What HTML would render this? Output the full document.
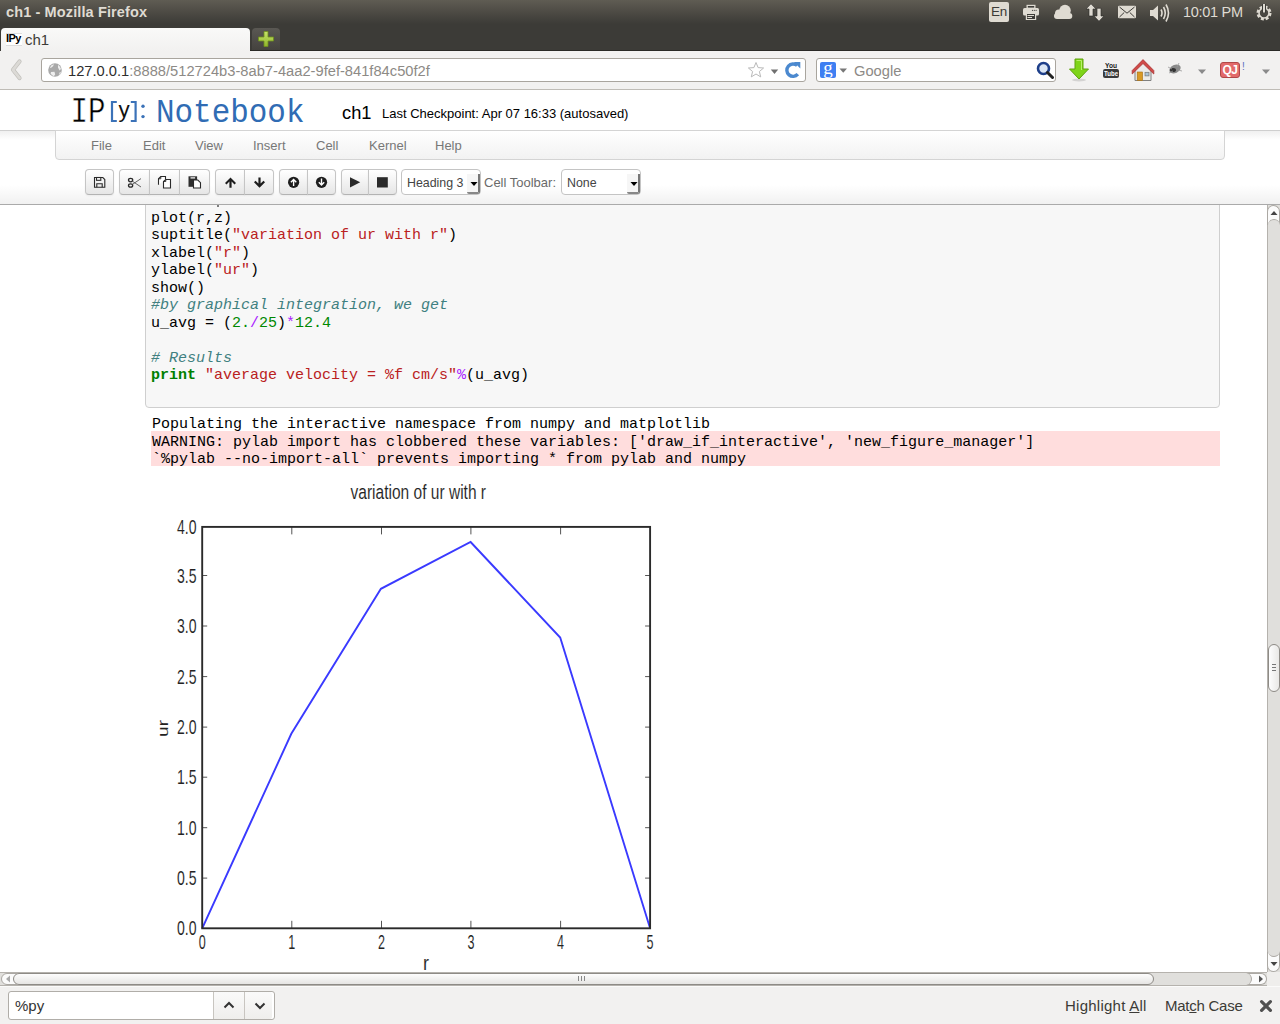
<!DOCTYPE html>
<html><head><meta charset="utf-8">
<style>
*{box-sizing:border-box;margin:0;padding:0}
html,body{width:1280px;height:1024px;overflow:hidden;background:#fff;font-family:"Liberation Sans",sans-serif;position:relative}
.a{position:absolute}
#panel{left:0;top:0;width:1280px;height:51px;background:linear-gradient(#5f5c53 0px,#4a4842 14px,#3c3b37 24px,#3c3b37 50px);}
#title{left:6px;top:4px;font-size:14.5px;font-weight:bold;color:#dfdbd2;letter-spacing:0.12px}
#tab{left:1px;top:28px;width:249px;height:23px;background:linear-gradient(#f9f9f8,#f2f1f0);border-radius:4px 4px 0 0}
#newtab{left:252px;top:28px;width:28px;height:22px;background:linear-gradient(#5a5853,#44423e);border-radius:4px 4px 0 0}
#navbar{left:0;top:51px;width:1280px;height:39px;background:#f2f1f0;border-bottom:1px solid #bfbcb6}
#darkline{left:0;top:50px;width:1280px;height:1px;background:#2a2926}
.urlbox{background:#fff;border:1px solid #a9a59e;border-radius:3px}
#page{left:0;top:90px;width:1280px;height:882px;background:#fff;overflow:hidden}
.mono{font-family:"Liberation Mono",monospace}
.menu{top:138px;font-size:13px;color:#777}
.btn{top:169px;height:26px;background:linear-gradient(#fff,#e6e6e6);border:1px solid #c5c5c5;border-bottom-color:#b3b3b3;box-shadow:inset 0 1px 0 rgba(255,255,255,.2),0 1px 2px rgba(0,0,0,.05)}
.sel{top:169px;height:26px;background:#fff;border:1px solid #c4c4c4;border-radius:4px;font-size:12.4px;color:#444;padding:5.5px 0 0 5px;white-space:nowrap}
.ddb{top:174px;width:13px;height:20px;background:#f6f6f6;border-right:2px solid #777;border-bottom:2px solid #888;border-radius:0 0 2px 2px}
.code{font-size:15px;line-height:17.5px;color:#000}
.code .s{color:#ba2121}.code .c{color:#408080;font-style:italic}.code .k{color:#008000;font-weight:bold}.code .n{color:#080}.code .o{color:#a2f}
.pl{font-family:"Liberation Sans",sans-serif;font-size:19.5px;fill:#222;stroke:#fff;stroke-width:0.1px;paint-order:normal}
</style></head><body>
<div id="panel" class="a"></div>
<div id="title" class="a">ch1 - Mozilla Firefox</div>
<div id="tab" class="a"></div>
<div class="a" style="left:6px;top:33px;width:16px;height:13px;background:#fff;border-top:1px solid #ddd;border-bottom:1px solid #ddd"></div>
<div class="a" style="left:6px;top:32px;font-size:11px;font-weight:bold;color:#000;letter-spacing:-0.6px">IPy</div>
<div class="a" style="left:25px;top:31px;font-size:15px;color:#3c3b37">ch1</div>
<div id="newtab" class="a"></div>
<svg class="a" style="left:258px;top:31px" width="16" height="16" viewBox="0 0 16 16"><defs><linearGradient id="gp" x1="0" y1="0" x2="0" y2="1"><stop offset="0" stop-color="#c6e36a"/><stop offset="1" stop-color="#8fb52a"/></linearGradient></defs><path d="M6 0.5h4v5.5h5.5v4H10v5.5H6V10H0.5V6H6z" fill="url(#gp)" stroke="#6e8f1c" stroke-width="0.8"/></svg>
<div class="a" style="left:250px;top:50px;width:1030px;height:1px;background:#2a2926"></div>
<div id="navbar" class="a"></div>
<!-- indicators -->
<div class="a" style="left:989px;top:2px;width:20px;height:20px;background:#dfdbd2;border-radius:2px;color:#3c3b37;font-size:13.5px;text-align:center;line-height:20px;letter-spacing:-0.3px">En</div>
<svg class="a" style="left:1020px;top:2px" width="22" height="22" viewBox="1020 2 22 22"><rect x="1026.5" y="4.8" width="9" height="4" fill="#dfdbd2"/><rect x="1027.8" y="6" width="6.4" height="1.6" fill="#3c3b37"/><rect x="1023" y="8" width="16" height="7.5" rx="1.5" fill="#dfdbd2"/><circle cx="1032.5" cy="10.3" r="0.6" fill="#3c3b37"/><circle cx="1034.3" cy="10.3" r="0.6" fill="#3c3b37"/><circle cx="1036.1" cy="10.3" r="0.6" fill="#3c3b37"/><rect x="1025.8" y="13" width="10.4" height="7" fill="#dfdbd2"/><rect x="1027" y="14" width="8" height="5" fill="#3c3b37"/><rect x="1027.5" y="15" width="6.5" height="1" fill="#dfdbd2"/><rect x="1027.5" y="17" width="4.5" height="1" fill="#dfdbd2"/></svg>
<svg class="a" style="left:1052px;top:2px" width="22" height="20" viewBox="1052 2 22 20"><circle cx="1065" cy="10.6" r="5.8" fill="#dfdbd2"/><circle cx="1058.8" cy="13.2" r="3.8" fill="#dfdbd2"/><rect x="1054" y="13" width="18.3" height="6" rx="3" fill="#dfdbd2"/></svg>
<svg class="a" style="left:1084px;top:2px" width="24" height="22" viewBox="1084 2 24 22"><path d="M1091 3.8 L1096 9 H1093 V16 H1089 V9 H1086 Z" fill="#dfdbd2" stroke="#2a2926" stroke-width="0.6"/><path d="M1099 21.2 L1104 16 H1101 V8.3 H1097 V16 H1094 Z" fill="#dfdbd2" stroke="#2a2926" stroke-width="0.6"/></svg>
<svg class="a" style="left:1116px;top:4px" width="22" height="16" viewBox="1116 4 22 16"><rect x="1118" y="5.8" width="18" height="12.4" rx="1.2" fill="#dfdbd2"/><path d="M1119.5 7 L1127 13.2 L1134.5 7 M1119.5 17 L1124.2 12.5 M1134.5 17 L1129.8 12.5" fill="none" stroke="#3c3b37" stroke-width="1"/></svg>
<svg class="a" style="left:1149px;top:3px" width="22" height="20" viewBox="0 0 22 20"><path d="M1 7 H4 L9 2.5 V17.5 L4 13 H1 Z" fill="#dfdbd2"/><path d="M12 6.5 Q14 10 12 13.5 M14.5 4 Q18 10 14.5 16 M17 1.5 Q22 10 17 18.5" fill="none" stroke="#dfdbd2" stroke-width="1.6"/></svg>
<div class="a" style="left:1183px;top:4px;font-size:14.5px;color:#dfdbd2;letter-spacing:-0.3px">10:01 PM</div>
<svg class="a" style="left:1254px;top:1.8px" width="20" height="20" viewBox="0 0 20 20"><circle cx="10" cy="11" r="6.3" fill="none" stroke="#dfdbd2" stroke-width="2.4" stroke-dasharray="3 1.9"/><circle cx="10" cy="11" r="5" fill="none" stroke="#dfdbd2" stroke-width="1.6"/><path d="M10 2 V11" stroke="#3c3b37" stroke-width="4"/><path d="M10 2 V10.5" stroke="#dfdbd2" stroke-width="2"/></svg>
<!-- nav -->
<svg class="a" style="left:9px;top:58px" width="16" height="24" viewBox="0 0 16 24"><path d="M10.5 3.5 L4 11.8 L10.5 20" fill="none" stroke="#c2c0bc" stroke-width="4.2" stroke-linecap="round" stroke-linejoin="round"/><path d="M10.5 3.5 L4 11.8 L10.5 20" fill="none" stroke="#dcdad6" stroke-width="2.8" stroke-linecap="round" stroke-linejoin="round"/></svg>
<div class="a urlbox" style="left:41px;top:58px;width:765px;height:24px"></div>
<svg class="a" style="left:47px;top:62px" width="16" height="16" viewBox="0 0 16 16"><circle cx="8" cy="8" r="6.8" fill="#a9a9a9"/><path d="M3 5.5 Q4 2.8 7 2.2 L6 4.2 L3.8 6 Z M11 2.8 Q13.5 4.5 14 7 L12.5 8.5 L11 5.5 Z M4 10 L7.5 9.8 L8.2 12.5 L6.8 14.2 Q4.5 13.2 3.6 11.5Z M12.5 10.5 L14 10 Q13.6 12 12.2 13Z" fill="#eee"/></svg>
<div class="a" style="left:68px;top:63px;font-size:14.7px;color:#2e2e2e;white-space:nowrap">127.0.0.1<span style="color:#8d8a86">:8888/512724b3-8ab7-4aa2-9fef-841f84c50f2f</span></div>
<svg class="a" style="left:747px;top:61px" width="18" height="18" viewBox="0 0 18 18"><path d="M9 1.5 L11.1 6.6 L16.6 7 L12.4 10.5 L13.7 15.9 L9 13 L4.3 15.9 L5.6 10.5 L1.4 7 L6.9 6.6 Z" fill="#fff" stroke="#b9b9b9" stroke-width="1"/></svg>
<svg class="a" style="left:770px;top:69px" width="9" height="6" viewBox="0 0 9 6"><path d="M0.8 0.5 H8.2 L4.5 5Z" fill="#707070"/></svg>
<svg class="a" style="left:783px;top:60px" width="20" height="20" viewBox="783 60 20 20"><path d="M797.8 74.2 A6.2 6.2 0 1 1 797.2 65.6" fill="none" stroke="#4b89cf" stroke-width="3.4"/><path d="M793.8 62 H800.3 V68.6 Z" fill="#4b89cf"/></svg>
<div class="a urlbox" style="left:816px;top:58px;width:240px;height:24px"></div>
<div class="a" style="left:820px;top:62px;width:16px;height:16px;background:#3f7ff2;border-radius:2px;color:#fff;font-family:'Liberation Serif',serif;font-size:19px;line-height:12px;text-align:center;overflow:hidden">g</div>
<svg class="a" style="left:839px;top:68px" width="9" height="6" viewBox="0 0 9 6"><path d="M0.5 0.5 H8 L4.25 4.8Z" fill="#777"/></svg>
<div class="a" style="left:854px;top:63px;font-size:14.7px;color:#8d8a86">Google</div>
<svg class="a" style="left:1036px;top:61px" width="18" height="18" viewBox="0 0 18 18"><circle cx="7.5" cy="7.5" r="5.5" fill="#dbe6f5" stroke="#1e3f8a" stroke-width="2.6"/><path d="M11.5 11.5 L16.5 16.5" stroke="#222" stroke-width="3" stroke-linecap="round"/></svg>
<svg class="a" style="left:1068px;top:58px" width="22" height="24" viewBox="0 0 22 24"><ellipse cx="11" cy="22" rx="7" ry="1.5" fill="#000" opacity="0.12"/><path d="M7 1 H15 V11 H20.5 L11 21 L1.5 11 H7 Z" fill="#7fd41a" stroke="#5ea10d" stroke-width="1"/><path d="M8.5 2.5 H13.5 V12" fill="none" stroke="#b9f06b" stroke-width="1"/></svg>
<svg class="a" style="left:1102px;top:61px" width="18" height="18" viewBox="0 0 18 18"><rect x="1" y="8" width="16" height="9" rx="2" fill="#3a3a3a"/><text x="9" y="7" font-family="Liberation Sans" font-weight="bold" font-size="8" text-anchor="middle" fill="#1a1a1a" textLength="12" lengthAdjust="spacingAndGlyphs">You</text><text x="9" y="15" font-family="Liberation Sans" font-weight="bold" font-size="8" text-anchor="middle" fill="#fff" textLength="14" lengthAdjust="spacingAndGlyphs">Tube</text></svg>
<svg class="a" style="left:1131px;top:57px" width="24" height="25" viewBox="0 0 24 25"><path d="M4 12.5 L12 4.5 L20 12.5 V23.5 H4 Z" fill="#ebebea" stroke="#808080" stroke-width="1"/><path d="M1.2 13.5 L12 2.6 L22.8 13.5 L22.8 17 L12 6.5 L1.2 17 Z" fill="#d04a48" stroke="#a83432" stroke-width="0.8" stroke-linejoin="round"/><rect x="6.2" y="15" width="5.3" height="8.5" fill="#d99a25" stroke="#a56c10" stroke-width="0.6"/><rect x="14" y="15.3" width="4" height="3.6" fill="#a9c4d8" stroke="#777" stroke-width="0.7"/></svg>
<svg class="a" style="left:1166px;top:61px" width="18" height="16" viewBox="0 0 18 16"><ellipse cx="9" cy="8" rx="6" ry="4" fill="#8a8a8a" transform="rotate(-25 9 8)"/><ellipse cx="7" cy="9" rx="3" ry="2" fill="#333"/><path d="M2 6 L6 8 M3 12 L7 10 M13 2 L11 6 M16 10 L12 9" stroke="#999" stroke-width="0.8"/></svg>
<svg class="a" style="left:1197px;top:69px" width="10" height="6" viewBox="0 0 10 6"><path d="M1 0.5 H9 L5 5Z" fill="#8a8a8a"/></svg>
<div class="a" style="left:1220px;top:62px;width:20px;height:16px;background:#e26a6a;border:1px solid #b04848;border-radius:3px;color:#fff;font-weight:bold;font-size:12px;line-height:14px;text-align:center;letter-spacing:-0.5px">QJ</div>
<div class="a" style="left:1242px;top:61px;font-size:10px;color:#5a6fc0">!</div>
<svg class="a" style="left:1261px;top:69px" width="10" height="6" viewBox="0 0 10 6"><path d="M1 0.5 H9 L5 5Z" fill="#8a8a8a"/></svg>
<div id="page" class="a"></div>
<!-- notebook header -->
<svg class="a" style="left:60px;top:90px" width="260" height="40" viewBox="60 90 260 40">
<text x="70.5" y="122" font-family="Liberation Mono" font-size="36" fill="#000" stroke="#fff" stroke-width="0.5" textLength="35" lengthAdjust="spacingAndGlyphs">IP</text>
<path d="M116.8 102 H112 V121 H116.8 M130.8 102 H135.6 V121 H130.8" fill="none" stroke="#3b72b8" stroke-width="2.2"/>
<text x="118.6" y="116.8" font-family="Liberation Sans" font-size="22" fill="#111" textLength="11.2" lengthAdjust="spacingAndGlyphs">y</text>
<circle cx="143" cy="106.3" r="1.7" fill="#3b72b8"/><circle cx="143" cy="116.6" r="1.7" fill="#3b72b8"/>
<text x="156" y="121.8" font-family="Liberation Mono" font-size="33.5" fill="#306cb4" textLength="148.5" lengthAdjust="spacingAndGlyphs">Notebook</text>
</svg>
<div class="a" style="left:342px;top:102px;font-size:18.3px;color:#000">ch1</div>
<div class="a" style="left:382px;top:106px;font-size:13px;color:#000;white-space:nowrap">Last Checkpoint: Apr 07 16:33 (autosaved)</div>
<!-- menubar -->
<div class="a" style="left:0;top:130px;width:1280px;height:1px;background:#cfcfcf"></div>
<div class="a" style="left:0;top:131px;width:1280px;height:9px;background:linear-gradient(#f0f0f0,#fff)"></div>
<div class="a" style="left:55px;top:130px;width:1170px;height:30px;background:linear-gradient(#fff,#f2f2f2);border:1px solid #d4d4d4;border-radius:0 0 4px 4px"></div>
<div class="a" style="left:0;top:185px;width:1280px;height:19px;background:linear-gradient(#fff,#f1f1f1)"></div>
<div class="a" style="left:0;top:204px;width:1280px;height:1px;background:#aaa"></div>
<div class="a menu" style="left:91px">File</div>
<div class="a menu" style="left:143px">Edit</div>
<div class="a menu" style="left:195px">View</div>
<div class="a menu" style="left:253px">Insert</div>
<div class="a menu" style="left:316px">Cell</div>
<div class="a menu" style="left:369px">Kernel</div>
<div class="a menu" style="left:435px">Help</div>
<!-- toolbar -->
<div class="a btn" style="left:85px;width:29px;border-radius:4px"></div>
<div class="a btn" style="left:119px;width:31px;border-radius:4px 0 0 4px"></div>
<div class="a btn" style="left:149px;width:31px;border-radius:0"></div>
<div class="a btn" style="left:179px;width:31px;border-radius:0 4px 4px 0"></div>
<div class="a btn" style="left:215px;width:30px;border-radius:4px 0 0 4px"></div>
<div class="a btn" style="left:244px;width:30px;border-radius:0 4px 4px 0"></div>
<div class="a btn" style="left:279px;width:29px;border-radius:4px 0 0 4px"></div>
<div class="a btn" style="left:307px;width:29px;border-radius:0 4px 4px 0"></div>
<div class="a btn" style="left:341px;width:28px;border-radius:4px 0 0 4px"></div>
<div class="a btn" style="left:368px;width:29px;border-radius:0 4px 4px 0"></div>
<svg class="a" style="left:80px;top:170px" width="320" height="24" viewBox="80 170 320 24">
<g fill="none" stroke="#2a2a2a" stroke-width="1.1">
<path d="M94.5 177.5 H102.8 L104.8 179.5 V187.3 H94.5 Z"/>
<rect x="96.5" y="177.5" width="4.3" height="2.8" fill="#fff"/>
<path d="M96.8 187.3 V183.8 H102.2 V187.3"/>
</g>
<g fill="none" stroke="#2a2a2a">
<ellipse cx="130.6" cy="180.1" rx="2.1" ry="1.7" stroke-width="1.3"/>
<ellipse cx="130.6" cy="185.5" rx="2.1" ry="1.7" stroke-width="1.3"/>
<path d="M132.4 181.2 L141 187 M132.4 184.4 L141 178.6" stroke-width="0.9" stroke="#555"/>
</g>
<g stroke="#2a2a2a" stroke-width="1.1">
<path d="M158.5 184.8 V178.8 L160.8 176.5 H165.5 V179.5" fill="#fff"/>
<path d="M163.5 188 V181.5 L165.8 179.5 H170.5 V188 Z" fill="#fff"/>
<path d="M158.5 178.8 H160.8 V176.5 M163.5 181.5 H165.8 V179.5" fill="none" stroke-width="0.9"/>
</g>
<rect x="188.5" y="176.3" width="8.6" height="10.5" fill="#2e2e2e"/>
<rect x="190.5" y="177.3" width="4.6" height="1.2" fill="#fff"/>
<path d="M193.5 188 V180 H197.8 L200.5 182.7 V188 Z" fill="#fff" stroke="#2a2a2a" stroke-width="1.1"/>
<path d="M230.5 177.5 L236 183 L234.5 184.5 L231.6 181.6 V187.7 H229.4 V181.6 L226.5 184.5 L225 183 Z" fill="#1e1e1e"/>
<path d="M259.5 187.7 L265 182.2 L263.5 180.7 L260.6 183.6 V177.5 H258.4 V183.6 L255.5 180.7 L254 182.2 Z" fill="#1e1e1e"/>
<circle cx="293.6" cy="182.3" r="5.6" fill="#1e1e1e"/>
<path d="M293.6 178.6 L296.8 181.8 L295.8 182.8 L294.3 181.3 V186 H292.9 V181.3 L291.4 182.8 L290.4 181.8 Z" fill="#fff"/>
<circle cx="321.5" cy="182.3" r="5.6" fill="#1e1e1e"/>
<path d="M321.5 186 L324.7 182.8 L323.7 181.8 L322.2 183.3 V178.6 H320.8 V183.3 L319.3 181.8 L318.3 182.8 Z" fill="#fff"/>
<path d="M350 177.2 L360.2 182.3 L350 187.5 Z" fill="#2a2a2a"/>
<rect x="377" y="177.2" width="10.8" height="10.3" fill="#2a2a2a"/>
</svg>
<!-- selects -->
<div class="a sel" style="left:401px;width:80px">Heading 3</div>
<div class="a ddb" style="left:467px"></div><svg class="a" style="left:470px;top:181px" width="8" height="6" viewBox="0 0 8 6"><path d="M0.5 1 H7.5 L4 5Z" fill="#000"/></svg>
<div class="a" style="left:484px;top:174.5px;font-size:13px;color:#6a6a6a;white-space:nowrap">Cell Toolbar:</div>
<div class="a sel" style="left:561px;width:80px">None</div>
<div class="a ddb" style="left:627px"></div><svg class="a" style="left:630px;top:181px" width="8" height="6" viewBox="0 0 8 6"><path d="M0.5 1 H7.5 L4 5Z" fill="#000"/></svg>
<!-- notebook -->
<div id="nb" class="a" style="left:0;top:205px;width:1267px;height:767px;background:#fff;overflow:hidden">
<div class="a" style="left:145px;top:-20px;width:1075px;height:223px;background:#f7f7f7;border:1px solid #cfcfcf;border-radius:4px"></div>
<pre class="a mono code" style="left:151px;top:4.5px">plot(r,z)
suptitle(<span class="s">"variation of ur with r"</span>)
xlabel(<span class="s">"r"</span>)
ylabel(<span class="s">"ur"</span>)
show()
<span class="c">#by graphical integration, we get</span>
u_avg = (<span class="n">2.</span><span class="o">/</span><span class="n">25</span>)<span class="o">*</span><span class="n">12.4</span>

<span class="c"># Results</span>
<span class="k">print</span> <span class="s">"average velocity = %f cm/s"</span><span class="o">%</span>(u_avg)
</pre>
<div class="a" style="left:151px;top:226px;width:1069px;height:35px;background:#fdd"></div>
<div class="a" style="left:217px;top:0px;width:2px;height:2px;background:#555;border-radius:1px"></div>
<pre class="a mono code" style="left:152px;top:211px">Populating the interactive namespace from numpy and matplotlib
WARNING: pylab import has clobbered these variables: ['draw_if_interactive', 'new_figure_manager']
`%pylab --no-import-all` prevents importing * from pylab and numpy
</pre>
</div>
<svg class="a" style="left:140px;top:470px" width="540" height="502" viewBox="140 470 540 502">
<path d="M291.8 526.9 v7.5 M291.8 928.3 v-7.5 M381.5 526.9 v7.5 M381.5 928.3 v-7.5 M470.9 526.9 v7.5 M470.9 928.3 v-7.5 M560.6 526.9 v7.5 M560.6 928.3 v-7.5 M202.2 878.1 h5 M650.1 878.1 h-5 M202.2 827.7 h5 M650.1 827.7 h-5 M202.2 777.2 h5 M650.1 777.2 h-5 M202.2 727.1 h5 M650.1 727.1 h-5 M202.2 676.6 h5 M650.1 676.6 h-5 M202.2 626.0 h5 M650.1 626.0 h-5 M202.2 575.5 h5 M650.1 575.5 h-5" stroke="#555" stroke-width="1" fill="none"/>
<path d="M202.2 928.3 L291.3 733.8 L380.9 588.8 L470.6 542.0 L560.2 637.5 L650.1 928.3" stroke="#3a3aff" stroke-width="1.9" fill="none"/>
<rect x="202.2" y="526.9" width="447.9" height="401.4" fill="none" stroke="#2a2a2a" stroke-width="1.9"/>
<text x="196.5" y="935.3" class="pl" text-anchor="end" textLength="19.5" lengthAdjust="spacingAndGlyphs">0.0</text>
<text x="196.5" y="885.1" class="pl" text-anchor="end" textLength="19.5" lengthAdjust="spacingAndGlyphs">0.5</text>
<text x="196.5" y="834.7" class="pl" text-anchor="end" textLength="19.5" lengthAdjust="spacingAndGlyphs">1.0</text>
<text x="196.5" y="784.2" class="pl" text-anchor="end" textLength="19.5" lengthAdjust="spacingAndGlyphs">1.5</text>
<text x="196.5" y="734.1" class="pl" text-anchor="end" textLength="19.5" lengthAdjust="spacingAndGlyphs">2.0</text>
<text x="196.5" y="683.6" class="pl" text-anchor="end" textLength="19.5" lengthAdjust="spacingAndGlyphs">2.5</text>
<text x="196.5" y="633.0" class="pl" text-anchor="end" textLength="19.5" lengthAdjust="spacingAndGlyphs">3.0</text>
<text x="196.5" y="582.5" class="pl" text-anchor="end" textLength="19.5" lengthAdjust="spacingAndGlyphs">3.5</text>
<text x="196.5" y="533.9" class="pl" text-anchor="end" textLength="19.5" lengthAdjust="spacingAndGlyphs">4.0</text>
<text x="202.2" y="949" class="pl" text-anchor="middle" textLength="7" lengthAdjust="spacingAndGlyphs">0</text>
<text x="291.8" y="949" class="pl" text-anchor="middle" textLength="7" lengthAdjust="spacingAndGlyphs">1</text>
<text x="381.5" y="949" class="pl" text-anchor="middle" textLength="7" lengthAdjust="spacingAndGlyphs">2</text>
<text x="470.9" y="949" class="pl" text-anchor="middle" textLength="7" lengthAdjust="spacingAndGlyphs">3</text>
<text x="560.6" y="949" class="pl" text-anchor="middle" textLength="7" lengthAdjust="spacingAndGlyphs">4</text>
<text x="650.1" y="949" class="pl" text-anchor="middle" textLength="7" lengthAdjust="spacingAndGlyphs">5</text>
<text x="418.3" y="498.5" class="pl" text-anchor="middle" textLength="135.5" lengthAdjust="spacingAndGlyphs">variation of ur with r</text>
<text x="426" y="970" class="pl" text-anchor="middle" textLength="6" lengthAdjust="spacingAndGlyphs">r</text>
<text transform="translate(168,728.5) scale(0.72,1) rotate(-90)" class="pl" text-anchor="middle" textLength="17" lengthAdjust="spacingAndGlyphs">ur</text>
</svg>



<!-- vertical scrollbar -->
<div class="a" style="left:1267px;top:205px;width:13px;height:767px;background:#e0dfdc;border-left:1px solid #b5b2ad"></div>
<div class="a" style="left:1267px;top:205px;width:13px;height:20px;background:#fbfbfb;border:1px solid #aba8a3;border-bottom:none;border-radius:7px 7px 0 0"></div>
<div class="a" style="left:1268px;top:219px;width:12px;height:12px;background:#e0dfdc;border-top:1px solid #aba8a3;border-radius:6px 6px 0 0"></div>
<svg class="a" style="left:1270px;top:210px" width="8" height="6" viewBox="0 0 8 6"><path d="M0.5 5 L4 1 L7.5 5Z" fill="#444"/></svg>
<div class="a" style="left:1267px;top:952px;width:13px;height:20px;background:#fbfbfb;border:1px solid #aba8a3;border-top:none;border-radius:0 0 7px 7px"></div>
<div class="a" style="left:1268px;top:945px;width:12px;height:12px;background:#e0dfdc;border-bottom:1px solid #aba8a3;border-radius:0 0 6px 6px"></div>
<svg class="a" style="left:1270px;top:961px" width="8" height="6" viewBox="0 0 8 6"><path d="M0.5 1 L4 5 L7.5 1Z" fill="#444"/></svg>
<div class="a" style="left:1268px;top:644px;width:12px;height:48px;background:linear-gradient(90deg,#fdfdfd,#e9e8e6);border:1px solid #8e8b86;border-radius:6px"></div>
<div class="a" style="left:1272px;top:664px;width:4px;height:1px;background:#777"></div>
<div class="a" style="left:1272px;top:667px;width:4px;height:1px;background:#777"></div>
<div class="a" style="left:1272px;top:670px;width:4px;height:1px;background:#777"></div>
<!-- horizontal scrollbar -->
<div class="a" style="left:0;top:972px;width:1267px;height:14px;background:#e0dfdc;border-top:1px solid #b5b2ad;border-bottom:1px solid #b5b2ad"></div>
<div class="a" style="left:1267px;top:972px;width:13px;height:14px;background:#efeeec"></div>
<div class="a" style="left:1px;top:973px;width:16px;height:12px;background:#fbfbfb;border:1px solid #aba8a3;border-radius:7px 0 0 7px"></div>
<svg class="a" style="left:5px;top:975px" width="6" height="8" viewBox="0 0 6 8"><path d="M5 0.5 L1 4 L5 7.5Z" fill="#aaa"/></svg>
<div class="a" style="left:13px;top:973px;width:1141px;height:12px;background:linear-gradient(#fdfdfd,#e6e5e3);border:1px solid #8e8b86;border-radius:6px"></div>
<div class="a" style="left:578px;top:976px;width:1px;height:5px;background:#888"></div>
<div class="a" style="left:581px;top:976px;width:1px;height:5px;background:#888"></div>
<div class="a" style="left:584px;top:976px;width:1px;height:5px;background:#888"></div>
<div class="a" style="left:1247px;top:973px;width:20px;height:12px;background:#fbfbfb;border:1px solid #aba8a3;border-left:none;border-radius:0 7px 7px 0"></div>
<div class="a" style="left:1240px;top:973px;width:12px;height:12px;background:#e0dfdc;border-right:1px solid #aba8a3;border-radius:0 6px 6px 0"></div>
<svg class="a" style="left:1258px;top:975px" width="6" height="8" viewBox="0 0 6 8"><path d="M1 0.5 L5 4 L1 7.5Z" fill="#555"/></svg>
<!-- find bar -->
<div class="a" style="left:0;top:986px;width:1280px;height:38px;background:#f2f1f0;border-top:1px solid #fbfbfa"></div>
<div class="a" style="left:8px;top:991px;width:267px;height:29px;background:#fff;border:1px solid #b0ada8;border-radius:3px"></div>
<div class="a" style="left:213px;top:992px;width:1px;height:27px;background:#c8c5c0"></div>
<div class="a" style="left:244px;top:992px;width:1px;height:27px;background:#c8c5c0"></div>
<div class="a" style="left:214px;top:992px;width:30px;height:27px;background:linear-gradient(#fafafa,#efeeec)"></div>
<div class="a" style="left:245px;top:992px;width:27px;height:27px;background:linear-gradient(#fafafa,#efeeec);border-radius:0 2px 2px 0"></div>
<svg class="a" style="left:223px;top:1001px" width="12" height="8" viewBox="0 0 12 8"><path d="M1.5 6.5 L6 2 L10.5 6.5" fill="none" stroke="#333" stroke-width="2"/></svg>
<svg class="a" style="left:254px;top:1002px" width="12" height="8" viewBox="0 0 12 8"><path d="M1.5 1.5 L6 6 L10.5 1.5" fill="none" stroke="#333" stroke-width="2"/></svg>
<div class="a" style="left:15px;top:997px;font-size:15px;color:#333">%py</div>
<div class="a" style="left:1065px;top:997px;font-size:15px;color:#3c3b37;white-space:nowrap;letter-spacing:0.25px">Highlight <u>A</u>ll</div>
<div class="a" style="left:1165px;top:997px;font-size:15px;color:#3c3b37;white-space:nowrap;letter-spacing:-0.25px">Mat<u>c</u>h Case</div>
<svg class="a" style="left:1259px;top:999px" width="14" height="14" viewBox="0 0 14 14"><path d="M2.6 2.6 L11.4 11.4 M11.4 2.6 L2.6 11.4" stroke="#505050" stroke-width="3.2" stroke-linecap="round"/></svg>
</body></html>
